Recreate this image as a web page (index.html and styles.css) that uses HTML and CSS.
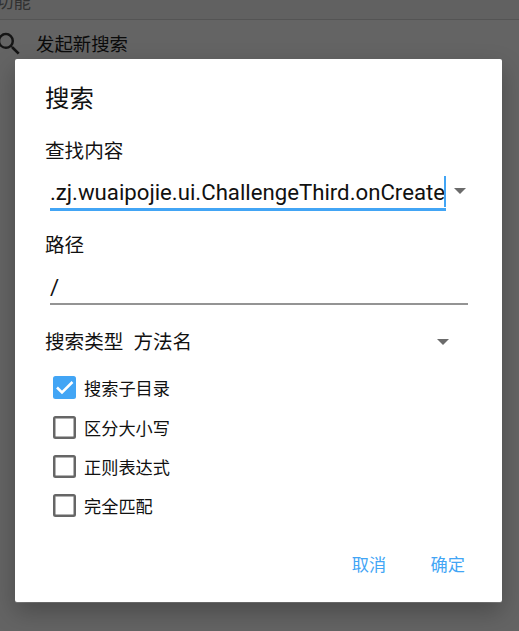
FILE: index.html
```html
<!DOCTYPE html>
<html lang="zh-CN">
<head>
  <meta charset="UTF-8">
  <title>搜索</title>
  <link rel="stylesheet" href="styles.css">
</head>
<body>

  <!-- 背景页面 -->
  <div class="page">
    <div class="section-title">功能</div>
    <div class="menu-item">
      <svg class="search-icon" width="30" height="30" viewBox="0 0 24 24">
        <path d="M15.5 14h-.79l-.28-.27A6.47 6.47 0 0 0 16 9.5 6.5 6.5 0 1 0 9.5 16c1.61 0 3.09-.59 4.23-1.57l.27.28v.79l5 4.99L20.49 19l-4.99-5zm-6 0C7.01 14 5 11.99 5 9.5S7.01 5 9.5 5 14 7.01 14 9.5 11.99 14 9.5 14z"/>
      </svg>
      <span>发起新搜索</span>
    </div>
  </div>

  <!-- 搜索对话框 -->
  <div class="dialog">
    <h1 class="title">搜索</h1>

    <div class="label">查找内容</div>
    <div class="input-row">
      <div class="field active"><span class="value">.zj.wuaipojie.ui.ChallengeThird.onCreate</span><i class="caret"></i></div>
      <i class="arrow"></i>
    </div>

    <div class="label path-label">路径</div>
    <div class="field path">/</div>

    <div class="type-row">
      <span class="type-label">搜索类型</span>
      <span>方法名</span>
      <i class="arrow"></i>
    </div>

    <div class="options">
      <div class="option">
        <span class="box checked">
          <svg width="23" height="23" viewBox="0 0 23 23"><path d="M4 11.5l5 5L19.5 6"/></svg>
        </span>
        <span>搜索子目录</span>
      </div>
      <div class="option"><span class="box"></span><span>区分大小写</span></div>
      <div class="option"><span class="box"></span><span>正则表达式</span></div>
      <div class="option"><span class="box"></span><span>完全匹配</span></div>
    </div>

    <div class="buttons">
      <span>取消</span>
      <span>确定</span>
    </div>
  </div>

</body>
</html>
```

FILE: styles.css
```css
* {
  box-sizing: border-box;
}
body {
  margin: 0;
  height: 631px;
  overflow: hidden;
  background-color: #646464;
  font-family: Roboto, "Noto Sans CJK SC", sans-serif;
  color: #111;
}
.page {
  height: 59px;
}
.section-title {
  height: 20px;
  margin-left: -4px;
  border-bottom: 1px solid #545454;
  background-color: #616161;
  font-size: 17.5px;
  line-height: 5px;
  color: #313131;
}
.menu-item {
  display: flex;
  align-items: center;
  height: 46px;
  font-size: 18.4px;
  color: #0b0b0b;
}
.search-icon {
  margin-left: -6px;
  margin-top: 1px;
  margin-right: 12px;
  fill: #151515;
}
.dialog {
  position: absolute;
  left: 15px;
  top: 59px;
  width: 487px;
  height: 543px;
  padding: 21px 34px 0 30px;
  border-radius: 2px;
  background-color: #fff;
  box-shadow: 0 10px 24px rgba(0, 0, 0, 0.26), 0 1px 0 rgba(255, 255, 255, 0.2);
}
.title {
  margin: 0 0 14px;
  font-size: 24.4px;
  font-weight: 400;
  line-height: 38px;
}
.label {
  font-size: 19.6px;
  line-height: 40px;
}
.path-label {
  margin-top: 15px;
}
.input-row {
  display: flex;
  align-items: center;
  height: 39px;
}
.field {
  height: 39px;
  margin-left: 5px;
  border-bottom: 2px solid #949494;
  font-size: 22.2px;
  line-height: 43px;
}
.field.active {
  display: flex;
  justify-content: flex-end;
  width: 396px;
  border-bottom: 3px solid #42a5f5;
  line-height: 41px;
  white-space: nowrap;
}
.caret {
  flex: none;
  width: 2px;
  height: 31px;
  margin-top: 4px;
  margin-left: -1px;
  background-color: #42a5f5;
}
.path {
  width: 418px;
}
.arrow {
  border: 6px solid transparent;
  border-top-color: #6b6b6b;
  border-bottom: 0;
}
.input-row .arrow {
  margin-top: -2px;
  margin-left: 8px;
}
.type-row {
  display: flex;
  align-items: center;
  height: 40px;
  margin-top: 15px;
  padding-right: 19px;
  font-size: 19.6px;
}
.type-label {
  margin-right: 10px;
}
.type-row .arrow {
  margin-top: 4px;
  margin-left: auto;
}
.options {
  margin-top: 8px;
  padding-left: 8px;
}
.option {
  display: flex;
  align-items: center;
  height: 39.4px;
  font-size: 17.2px;
}
.box {
  width: 23px;
  height: 23px;
  margin-right: 8px;
  border: 2px solid #666;
  border-radius: 2.5px;
  box-shadow: inset 0 0 0 0.5px #666;
}
.box.checked {
  border: 0;
  background-color: #42a5f5;
  box-shadow: none;
}
.box svg {
  display: block;
  fill: none;
  stroke: #fff;
  stroke-width: 2.5;
}
.buttons {
  display: flex;
  justify-content: flex-end;
  gap: 44.5px;
  margin-top: 19px;
  padding-right: 3px;
  font-size: 17.2px;
  line-height: 40px;
  color: #42a5f5;
}
```
